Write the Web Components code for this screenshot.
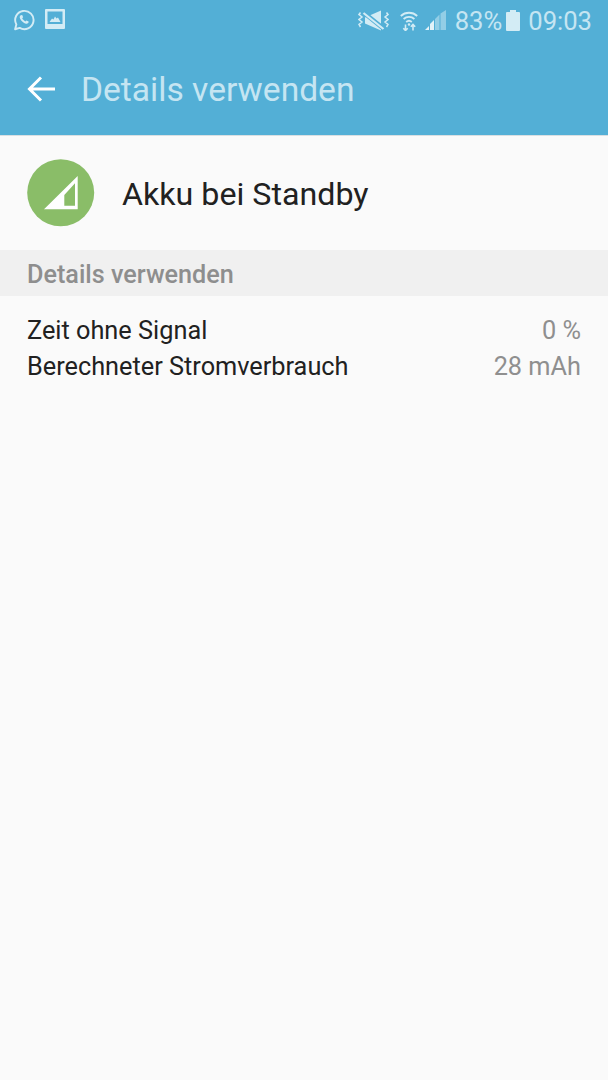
<!DOCTYPE html>
<html>
<head>
<meta charset="utf-8">
<style>
  html, body { margin: 0; padding: 0; height: 100%; background: #fafafa; }
  body { font-family: Roboto, sans-serif; width: 608px; height: 1080px; overflow: hidden; }
</style>
</head>
<body>
<app-bar title="Details verwenden"></app-bar>
<app-heading label="Akku bei Standby"></app-heading>
<section-title>Details verwenden</section-title>
<detail-list>
  <detail-row label="Zeit ohne Signal" value="0 %"></detail-row>
  <detail-row label="Berechneter Stromverbrauch" value="28 mAh"></detail-row>
</detail-list>

<script>
// Barra de estado + barra de titulo
class AppBar extends HTMLElement {
  constructor() {
    super();
    this.attachShadow({ mode: "open" });
  }
  connectedCallback() {
    this.shadowRoot.innerHTML = `
      <style>
        :host { display: block; height: 136px; box-sizing: border-box; background: #53afd6; border-bottom: 1px solid #d9dfe2; color: #c5e5f2; }
        .status { height: 40px; display: flex; align-items: center; padding: 0 16px 0 13px; box-sizing: border-box; }
        .left { display: flex; align-items: center; gap: 10px; }
        .right { margin-left: auto; display: flex; align-items: center; font-size: 25.6px; }
        .right span { margin-top: 2px; }
        svg { display: block; }
        .title { height: 95px; display: flex; align-items: center; padding: 0 0 0 27px; box-sizing: border-box; }
        .title span { margin-left: 26px; font-size: 33.600px; line-height: 36px; margin-top: 4px; }
        .title svg { margin-top: 3px; }
      </style>
      <div class="status">
        <div class="left">
          <svg width="22" height="22" viewBox="0 0 23 23" fill="none" stroke="#d3ecf5" stroke-width="2">
            <path d="M2.200 21.200l1.300-5A9.600 9.600 0 1 1 7 19.800z" stroke-linejoin="round"/>
            <path d="M8 6.600c-1.500 1-1.300 3 .6 5.400 2 2.400 4 3.600 6 3.300 1.300-.2 2-1.200 1.700-2.200l-2.300-1.200-1.100 1.100c-1.300-.5-2.600-1.800-3.300-3.200l1-1.100-1-2.300z" fill="#d3ecf5" stroke="none"/>
          </svg>
          <svg width="20" height="20" viewBox="0 0 20 20" style="margin-top:-2px">
            <path fill-rule="evenodd" fill="#d3ecf5" d="M1 0h18a1 1 0 0 1 1 1v18a1 1 0 0 1-1 1H1a1 1 0 0 1-1-1V1a1 1 0 0 1 1-1zM2.500 2.500v12.500h15V2.500z"/>
            <path fill="#d3ecf5" d="M4.500 13l2.500-3.500 1.500 1 1.500-3 1.500 2 1.500-1 2.500 4.500z"/>
          </svg>
        </div>
        <div class="right">
          <svg width="31" height="21" viewBox="0 0 31 21" style="margin-right:11px" fill="none" stroke="#d3ecf5">
            <path d="M2.500 2.500l-1.500 2 3 2.500-3 2.500 3 2.500-3 2.500 1.500 2.500M28.500 2.500l1.500 2-3 2.500 3 2.500-3 2.500 3 2.500-1.500 2.500" stroke-width="1.500"/>
            <path d="M7 7.500l16-7v20l-16-7z" fill="#d3ecf5" stroke="none"/>
            <path d="M5 2l21 17" stroke="#53afd6" stroke-width="4.500"/>
            <path d="M5.500 3l20 16" stroke="#d3ecf5" stroke-width="2.200"/>
          </svg>
          <svg width="18" height="21" viewBox="0 0 18 21" style="margin-right:7px" fill="none" stroke="#d3ecf5" stroke-width="1.800">
            <path d="M.8 6a12 12 0 0 1 16.400 0M3.600 9a8 8 0 0 1 10.800 0M6.200 12a4.200 4.200 0 0 1 5.600 0"/>
            <circle cx="9" cy="14.500" r="1.200" fill="#d3ecf5" stroke="none"/>
            <path d="M5.500 14.500v6M3.300 18.200l2.200 2.300 2.200-2.300M13 20.500v-6M10.800 16.800l2.200-2.300 2.200 2.300" stroke-width="1.600"/>
          </svg>
          <svg width="21" height="20" viewBox="0 0 21 20" style="margin-right:9px">
            <path d="M0 20l4-4v4zM5 20v-6l4-4v10z" fill="#e3f2f8"/>
            <path d="M10 20V9l4.500-4.500V20zM15.500 20V3.500L21 0v20z" fill="#93cee6"/>
          </svg>
          <span>83%</span>
          <svg width="14" height="21" viewBox="0 0 14 21" style="margin:0 8px 0 4px">
            <path d="M4 0h6v2h3a1 1 0 0 1 1 1v17a1 1 0 0 1-1 1H1a1 1 0 0 1-1-1V3a1 1 0 0 1 1-1h3z" fill="#d3ecf5"/>
          </svg>
          <span>09:03</span>
        </div>
      </div>
      <div class="title">
        <svg width="28" height="26" viewBox="0 0 28 26" fill="none" stroke="#fff" stroke-width="3">
          <path d="M28 13H3M14 1.500L2.500 13 14 24.500"/>
        </svg>
        <span>${this.getAttribute("title")}</span>
      </div>
    `;
  }
}
customElements.define("app-bar", AppBar);

// Cabecera con el icono verde
class AppHeading extends HTMLElement {
  constructor() {
    super();
    this.attachShadow({ mode: "open" });
  }
  connectedCallback() {
    this.shadowRoot.innerHTML = `
      <style>
        :host { display: flex; align-items: center; height: 114px; padding: 0 0 0 27px; box-sizing: border-box; color: #212121; }
        svg { display: block; margin-top: -1px; }
        span { margin-left: 27px; font-size: 32.200px; margin-top: 2px; }
      </style>
      <svg width="68" height="68" viewBox="0 0 68 68">
        <circle cx="33.700" cy="33.700" r="33.500" fill="#8abd68"/>
        <path fill="#fff" fill-rule="evenodd" d="M17 50.300L50.700 17v33.300zM37.300 46.700H48V24.300L37.300 36z"/>
      </svg>
      <span>${this.getAttribute("label")}</span>
    `;
  }
}
customElements.define("app-heading", AppHeading);

class SectionTitle extends HTMLElement {
  constructor() {
    super();
    const root = this.attachShadow({ mode: "open" });
    root.innerHTML = `
      <style>
        :host { display: flex; align-items: center; height: 46px; padding: 2px 0 0 27px; box-sizing: border-box; background: #f0f0f0; color: #8e8e8e; font-size: 25.200px; font-weight: 500; }
      </style>
      <slot></slot>
    `;
  }
}
customElements.define("section-title", SectionTitle);

class DetailList extends HTMLElement {
  constructor() {
    super();
    const root = this.attachShadow({ mode: "open" });
    root.innerHTML = `
      <style>
        :host { display: flex; flex-direction: column; padding: 16px 27px 0; }
      </style>
      <slot></slot>
    `;
  }
}
customElements.define("detail-list", DetailList);

class DetailRow extends HTMLElement {
  constructor() {
    super();
    this.attachShadow({ mode: "open" });
  }
  connectedCallback() {
    this.shadowRoot.innerHTML = `
      <style>
        :host { display: flex; justify-content: space-between; align-items: center; height: 36px; font-size: 25.300px; }
        .l { color: #212121; }
        .v { color: #8f8f8f; }
      </style>
      <span class="l">${this.getAttribute("label")}</span>
      <span class="v">${this.getAttribute("value")}</span>
    `;
  }
}
customElements.define("detail-row", DetailRow);
</script>
</body>
</html>
